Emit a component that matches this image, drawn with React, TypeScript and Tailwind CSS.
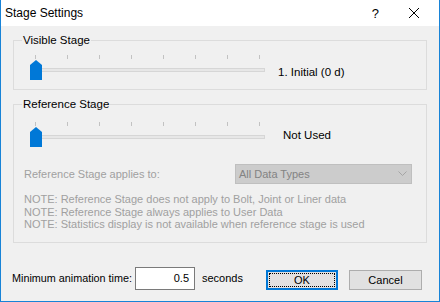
import React from "react";

const font = { fontFamily: '"Liberation Sans", Arial, sans-serif' };

const Slider = ({ label, labelClass }: { label: string; labelClass: string }) => (
  <div className="flex items-center">
    <div className="relative w-[250px] h-[25px]">
      {/* tick marks */}
      <div className="absolute left-[20px] top-0 flex gap-[31px]">
        {[0, 1, 2, 3, 4, 5, 6, 7].map((i) => (
          <div key={i} className="w-px h-[4px] bg-[#c2c2c2]" />
        ))}
      </div>
      {/* track */}
      <div className="absolute left-[16px] top-[13px] w-[234px] h-[4px] bg-[#e7e7e7] border border-[#d6d6d6]" />
      {/* thumb */}
      <svg className="absolute left-[15px] top-[5px]" width="12" height="20" viewBox="0 0 12 20">
        <polygon points="0,20 0,5 6,0 12,5 12,20" fill="#0078d7" />
      </svg>
    </div>
    <span className={labelClass}>{label}</span>
  </div>
);

export default function App() {
  return (
    <div
      style={font}
      className="w-[440px] h-[302px] bg-[#f0f0f0] border-x border-b border-[#1883d7] flex flex-col text-[11px] text-black leading-[13px]"
    >
      {/* Title bar */}
      <div className="h-[26px] bg-white flex items-center shrink-0">
        <span className="pl-[4px] text-[12px] text-black">Stage Settings</span>
        <span className="ml-auto mr-[29px] text-[13px]">?</span>
        <svg className="mr-[19px]" width="12" height="12" viewBox="0 0 12 12">
          <line x1="1" y1="1" x2="11" y2="11" stroke="#000" strokeWidth="1" />
          <line x1="11" y1="1" x2="1" y2="11" stroke="#000" strokeWidth="1" />
        </svg>
      </div>

      <div className="flex flex-col px-[12px]">
        {/* Visible Stage */}
        <fieldset className="mt-[8px] h-[56px] border border-[#dcdcdc] pl-[1px]">
          <legend className="ml-[7px] px-[1px] text-[11.5px]">Visible Stage</legend>
          <div className="mt-[8px]">
            <Slider label="1. Initial (0 d)" labelClass="ml-[13px] mt-[9px] text-[11.5px]" />
          </div>
        </fieldset>

        {/* Reference Stage */}
        <fieldset className="mt-[8px] h-[145px] border border-[#dcdcdc] pl-[1px]">
          <legend className="ml-[7px] px-[1px] text-[11.5px]">Reference Stage</legend>
          <div className="mt-[11px]">
            <Slider label="Not Used" labelClass="ml-[18px] mt-[2px] text-[11.5px]" />
          </div>

          <div className="mt-[17px] flex items-center pl-[9px]">
            <span className="text-[#a0a0a0] w-[211px]">Reference Stage applies to:</span>
            <div className="w-[177px] h-[20px] bg-[#cccccc] border border-[#bfbfbf] flex items-center pl-[3px] text-[#838383]">
              All Data Types
              <svg className="ml-auto mr-[4px]" width="9" height="6" viewBox="0 0 9 6">
                <polyline points="0.5,0.5 4.5,4.5 8.5,0.5" fill="none" stroke="#a5a5a5" strokeWidth="1" />
              </svg>
            </div>
          </div>

          <div className="mt-[9px] pl-[9px] flex flex-col text-[#a0a0a0] leading-[12.5px]">
            <span>NOTE: Reference Stage does not apply to Bolt, Joint or Liner data</span>
            <span>NOTE: Reference Stage always applies to User Data</span>
            <span>NOTE: Statistics display is not available when reference stage is used</span>
          </div>
        </fieldset>
      </div>

      {/* Bottom row */}
      <div className="mt-[24px] flex items-center pl-[11px]">
        <span className="w-[123px] whitespace-nowrap text-[10.8px]">Minimum animation time:</span>
        <div className="w-[60px] h-[23px] bg-white border border-[#7a7a7a] flex items-center justify-end pr-[5px]">
          0.5
        </div>
        <span className="ml-[7px]">seconds</span>
        <button className="ml-[23px] mt-[3px] w-[72px] h-[20px] bg-[#e1e1e1] border-2 border-[#0078d7] p-px">
          <div className="w-full h-full border border-dotted border-black flex items-center justify-center">
            OK
          </div>
        </button>
        <button className="ml-[11px] mt-[3px] w-[73px] h-[20px] bg-[#e1e1e1] border border-[#adadad] flex items-center justify-center">
          Cancel
        </button>
      </div>
    </div>
  );
}
